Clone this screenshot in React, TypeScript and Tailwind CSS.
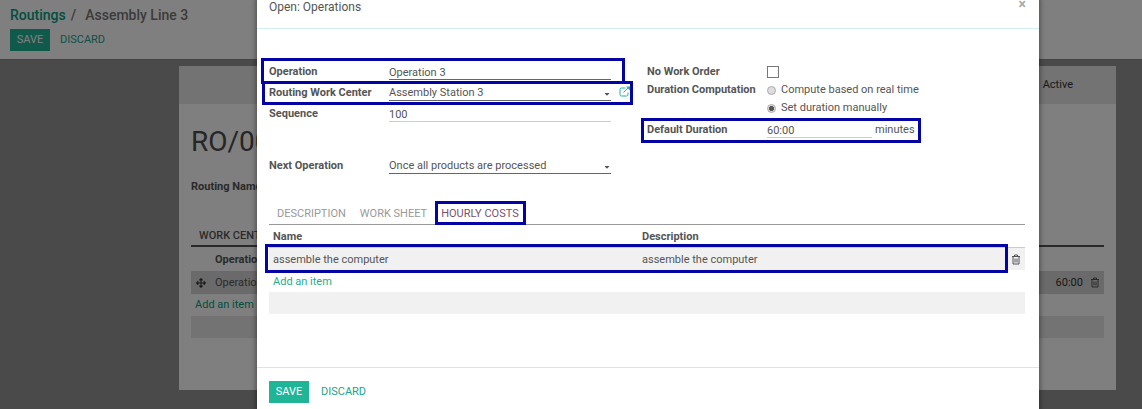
import React from "react";
import { FaArrowsAlt, FaCaretDown } from "react-icons/fa";

function TrashIcon() {
  return (
    <svg viewBox="0 0 10 11" className="h-[11px] w-[10px]" fill="none" stroke="currentColor" aria-hidden="true">
      <path d="M1 2.500h8M3.500 2.500v-1.500h3v1.500M2 2.500v7.500h6v-7.500M4 4.500v4M6 4.500v4" />
    </svg>
  );
}

function ExternalIcon() {
  return (
    <svg viewBox="0 0 12 11" className="h-[11px] w-3" fill="none" stroke="currentColor" aria-hidden="true">
      <path d="M6.500 2H2.500Q1 2 1 3.500V8.500Q1 10 2.500 10H7.500Q9 10 9 8.500V6.500M4.500 6.500L10 1" />
      <path d="M7 .5h4v4z" fill="currentColor" stroke="none" />
    </svg>
  );
}

function Highlight({ className }: { className: string }) {
  return <span aria-hidden="true" className={`pointer-events-none absolute border-3 border-[#0303a6] ${className}`} />;
}

function Actions({ gap = "" }: { gap?: string }) {
  return (
    <div className={`flex ${gap}`}>
      <button className="h-[22px] w-10 bg-[#1fb596] text-center text-white">SAVE</button>
      <button className="h-[22px] px-[10px] text-[#20a48c]">DISCARD</button>
    </div>
  );
}

function SelectField({ id, value }: { id: string; value: string }) {
  return (
    <div className="relative flex-1">
      <select id={id} className="block h-[18px] w-full appearance-none border-b border-[#666] bg-transparent pt-[3px] leading-[14px] outline-none">
        <option>{value}</option>
      </select>
      <FaCaretDown className="pointer-events-none absolute right-0 top-[7px] size-[8px]" />
    </div>
  );
}

const labelClass = "h-[18px] w-[120px] shrink-0 font-bold leading-5";
const inputClass = "h-[18px] border-b pt-[3px] leading-[14px] outline-none";

function Background() {
  return (
    <div className="min-h-screen bg-[#949494]">
      <header className="h-[60px] border-b border-[#888] bg-white px-[10px] pt-[5px]">
        <h1 className="mb-1 flex gap-[5px] text-[14px] leading-5 font-medium text-[#777]">
          <a href="#routings" className="text-[#00a083]">Routings</a>
          <span>/</span>
          <span className="pl-1">Assembly Line 3</span>
        </h1>
        <Actions />
      </header>
      <main className="mt-[6px] mr-[26px] ml-[179px] bg-white px-3 pb-[52px]">
        <div className="-mx-3 flex h-[38px] items-center justify-end bg-[#e6e6e6] pr-[43px] text-[#333]">
          <button>Active</button>
        </div>
        <h2 className="pt-[22px] text-[28px] leading-8 text-[#4c4c4c]">RO/00</h2>
        <p className="mt-[21px] font-bold leading-4">Routing Name</p>
        <h3 className="mt-8 h-5 border-b-2 border-[#555] pl-2 text-[11px] leading-[18px] font-medium">WORK CENT</h3>
        <table className="mt-px w-full">
          <thead>
            <tr className="h-[23px]">
              <th className="w-6" />
              <th className="pt-px text-left">Operation</th>
              <th />
              <th />
            </tr>
          </thead>
          <tbody>
            <tr className="h-[23px] bg-[#d4d4d4]">
              <td className="w-6 pl-[5px]"><FaArrowsAlt className="size-[10px] text-[#333]" /></td>
              <td className="pt-px">Operation</td>
              <td className="pt-px pr-[7px] text-right text-[#333]">60:00</td>
              <td className="w-[14px]"><button aria-label="Delete operation" className="block"><TrashIcon /></button></td>
            </tr>
            <tr className="h-[22px]">
              <td colSpan={4} className="pl-1"><a href="#add" className="text-[#00a083]">Add an item</a></td>
            </tr>
            <tr className="h-[22px] bg-[#e6e6e6]"><td colSpan={4} /></tr>
          </tbody>
        </table>
      </main>
    </div>
  );
}

function Dialog() {
  return (
    <section role="dialog" aria-label="Open: Operations" className="min-h-screen flex-1 bg-white shadow-[0_0_4px_2px_rgba(0,0,0,0.3)]">
      <header className="flex h-[29px] items-start justify-between border-b border-[#d2eeee] pr-[13px] pl-3">
        <h2 className="text-[12px] leading-[14px]">Open: Operations</h2>
        <button aria-label="Close" className="text-[14px] leading-[8px] font-bold text-[#aaa]">×</button>
      </header>
      <div className="pt-[33px] pr-[14px] pl-3">
        <div className="grid grid-cols-2 leading-[18px]">
          <div className="pr-9">
            <div className="relative mb-[3px] flex">
              <label htmlFor="operation" className={labelClass}>Operation</label>
              <input id="operation" defaultValue="Operation 3" className={`${inputClass} min-w-0 flex-1 border-[#666]`} />
              <Highlight className="-top-1 -right-[14px] -left-2 h-[26px]" />
            </div>
            <div className="relative mb-[3px] flex">
              <label htmlFor="center" className={labelClass}>Routing Work Center</label>
              <SelectField id="center" value="Assembly Station 3" />
              <button aria-label="External link" className="-mr-[19px] ml-2 h-4 w-[11px] text-[#1fb596]"><ExternalIcon /></button>
              <Highlight className="-top-[2px] -right-[22px] -left-[7px] h-6" />
            </div>
            <div className="flex">
              <label htmlFor="sequence" className={labelClass}>Sequence</label>
              <input id="sequence" defaultValue="100" className={`${inputClass} min-w-0 flex-1 border-[#ccc]`} />
            </div>
            <div className="mt-[34px] flex">
              <label htmlFor="next" className={labelClass}>Next Operation</label>
              <SelectField id="next" value="Once all products are processed" />
            </div>
          </div>
          <div className="pt-px">
            <div className="flex items-center">
              <label htmlFor="no-order" className="w-[120px] font-bold">No Work Order</label>
              <input id="no-order" type="checkbox" className="size-3 appearance-none border border-[#777]" />
            </div>
            <fieldset className="flex">
              <legend className="float-left w-[120px] font-bold">Duration Computation</legend>
              <div>
                <label className="flex items-center gap-[5px]">
                  <input type="radio" name="duration" className="size-[9px] appearance-none rounded-full border border-[#aaa] bg-[#ddd]" />
                  Compute based on real time
                </label>
                <label className="flex items-center gap-[5px]">
                  <input type="radio" name="duration" defaultChecked className="size-[9px] appearance-none rounded-full border border-[#aaa] bg-[radial-gradient(#555_45%,#ddd_50%)]" />
                  Set duration manually
                </label>
              </div>
            </fieldset>
            <div className="relative mt-[3px] flex w-[266px]">
              <label htmlFor="default" className={labelClass}>Default Duration</label>
              <input id="default" defaultValue="60:00" className={`${inputClass} w-[105px] border-[#ccc]`} />
              <span className="ml-[3px] h-[18px] leading-5">minutes</span>
              <Highlight className="-top-[2px] -right-[8px] -left-[6px] h-[25px]" />
            </div>
          </div>
        </div>
        <nav className="mt-7 flex h-[23px] border-b border-[#999] text-[#999]">
          <button className="pt-[2px] pr-[7px] pl-2">DESCRIPTION</button>
          <button className="px-[7px] pt-[2px]">WORK SHEET</button>
          <button className="relative px-[7px] pt-[2px] text-[#7c4f72]">
            HOURLY COSTS
            <Highlight className="-top-px right-0 left-px h-6" />
          </button>
        </nav>
        <div className="relative">
          <table className="w-full table-fixed">
            <thead>
              <tr className="h-[22px] border-b border-[#ccc] text-left">
                <th className="pt-[2px] pl-1">Name</th>
                <th className="pt-[2px] pl-1">Description</th>
                <th className="w-[18px]" />
              </tr>
            </thead>
            <tbody>
              <tr className="h-[23px] bg-[#f1f1f1]">
                <td className="pt-[2px] pl-1">assemble the computer</td>
                <td className="pt-[2px] pl-1">assemble the computer</td>
                <td className="pt-[2px] pl-1"><button aria-label="Delete line" className="block"><TrashIcon /></button></td>
              </tr>
              <tr className="h-[22px]">
                <td colSpan={3} className="pt-[2px] pl-1"><a href="#add-line" className="text-[#20ae92]">Add an item</a></td>
              </tr>
              <tr className="h-[22px] bg-[#f1f1f1]"><td colSpan={3} /></tr>
            </tbody>
          </table>
          <Highlight className="top-[19px] right-[17px] -left-1 h-[29px]" />
        </div>
      </div>
      <footer className="mt-[53px] border-t border-[#e2e2e2] pt-[13px] pb-[5px] pl-3">
        <Actions gap="gap-[2px]" />
      </footer>
    </section>
  );
}

export default function App() {
  return (
    <div className="relative overflow-hidden font-[Roboto,sans-serif] text-[11px] leading-[18px] text-[#555]">
      <Background />
      <div className="absolute inset-0 flex bg-black/50 pr-[103px] pl-[257px]">
        <Dialog />
      </div>
    </div>
  );
}
